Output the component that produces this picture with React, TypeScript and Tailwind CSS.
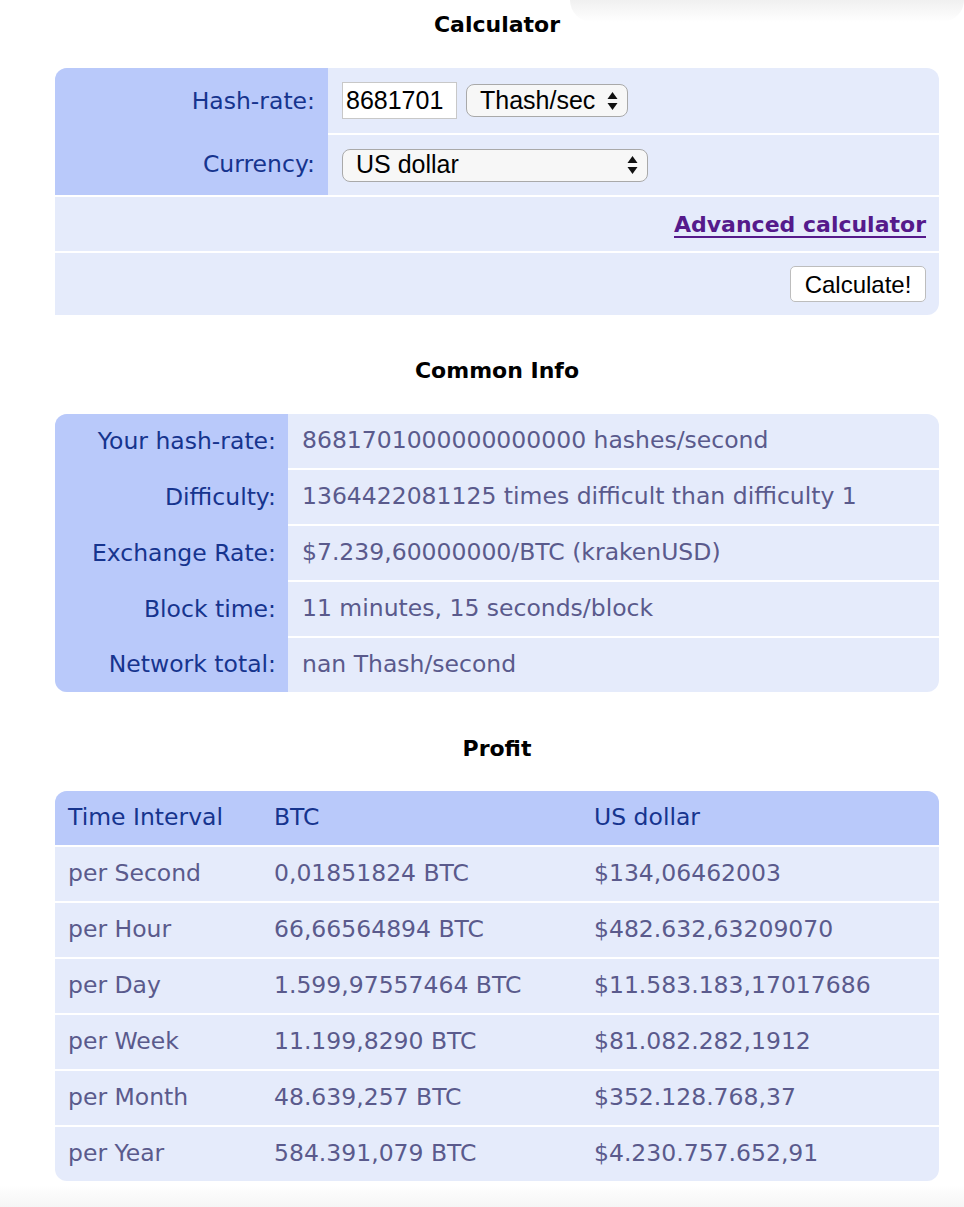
import React from "react";

const labelFont = "font-['DejaVu_Sans',Verdana,sans-serif]";
const ctrlFont = "font-['Liberation_Sans',Arial,sans-serif]";

const Arrows: React.FC = () => (
  <svg width="11" height="20" viewBox="0 0 11 20" className="shrink-0">
    <path d="M5.5 1 L10.5 8 L0.5 8 Z" fill="#111" />
    <path d="M5.5 19 L10.5 12 L0.5 12 Z" fill="#111" />
  </svg>
);

const Heading: React.FC<{ children: React.ReactNode; className?: string }> = ({ children, className }) => (
  <div className={`h-[48px] flex items-center justify-center text-[22px] font-bold text-black ${labelFont} ${className ?? ""}`}>
    {children}
  </div>
);

const info = [
  ["Your hash-rate:", "8681701000000000000 hashes/second"],
  ["Difficulty:", "1364422081125 times difficult than difficulty 1"],
  ["Exchange Rate:", "$7.239,60000000/BTC (krakenUSD)"],
  ["Block time:", "11 minutes, 15 seconds/block"],
  ["Network total:", "nan Thash/second"],
];

const profit = [
  ["per Second", "0,01851824 BTC", "$134,06462003"],
  ["per Hour", "66,66564894 BTC", "$482.632,63209070"],
  ["per Day", "1.599,97557464 BTC", "$11.583.183,17017686"],
  ["per Week", "11.199,8290 BTC", "$81.082.282,1912"],
  ["per Month", "48.639,257 BTC", "$352.128.768,37"],
  ["per Year", "584.391,079 BTC", "$4.230.757.652,91"],
];

export default function App() {
  return (
    <div className={`relative w-[964px] h-[1207px] bg-white overflow-hidden ${labelFont}`}>
      {/* shadow of an overlay at the top right */}
      <div className="absolute top-0 left-[570px] right-0 h-[22px] bg-gradient-to-b from-[#f0f0f0] to-transparent rounded-b-[40px] pointer-events-none" />

      <div className="px-[55px] pr-[25px]">
        <Heading>Calculator</Heading>

        {/* Calculator */}
        <div className="mt-[20px] bg-[#e5ebfb] rounded-tl-[12px] rounded-tr-[12px] rounded-br-[12px] overflow-hidden">
          <div className="grid grid-cols-[273px_1fr] border-b-2 border-white">
            <div className="bg-[#b9c9fa] flex flex-col text-[23.5px] text-[#16348e]">
              <div className="h-[67px] flex items-center justify-end pr-[13px]">Hash-rate:</div>
              <div className="h-[60px] flex items-center justify-end pr-[13px]">Currency:</div>
            </div>
            <div className="flex flex-col">
              <div className="h-[67px] flex items-center pl-[14px] gap-[9px] border-b-2 border-white">
                <div className={`w-[115px] h-[37px] bg-white border border-[#c8c8c8] flex items-center pl-[3px] text-[25px] text-black ${ctrlFont}`}>
                  8681701
                </div>
                <div className={`w-[162px] h-[33px] bg-[#f7f7f7] border-[1.5px] border-[#a9a9a9] rounded-[8px] flex items-center justify-between pl-[13px] pr-[9px] text-[25px] text-black ${ctrlFont}`}>
                  <span>Thash/sec</span>
                  <Arrows />
                </div>
              </div>
              <div className="h-[60px] flex items-center pl-[14px]">
                <div className={`w-[306px] h-[33px] bg-[#f7f7f7] border-[1.5px] border-[#a9a9a9] rounded-[8px] flex items-center justify-between pl-[13px] pr-[9px] text-[25px] text-black ${ctrlFont}`}>
                  <span>US dollar</span>
                  <Arrows />
                </div>
              </div>
            </div>
          </div>
          <div className="h-[56px] flex items-center justify-end pr-[13px] border-b-2 border-white">
            <a href="#" className="text-[22px] font-bold text-[#551a8b] underline underline-offset-[4px] decoration-[2px]">
              Advanced calculator
            </a>
          </div>
          <div className="h-[62px] flex items-center justify-end pr-[13px]">
            <button className={`w-[136px] h-[36px] bg-white border-[1.5px] border-[#bdbdbd] rounded-[5px] text-[24px] text-black ${ctrlFont}`}>
              Calculate!
            </button>
          </div>
        </div>

        <Heading className="mt-[31px]">Common Info</Heading>

        {/* Common info */}
        <div className="mt-[20px] grid grid-cols-[233px_1fr] rounded-[12px] overflow-hidden bg-[#e5ebfb] text-[23.5px]">
          <div className="bg-[#b9c9fa] flex flex-col text-[#16348e]">
            {info.map(([label], i) => (
              <div key={i} className={`flex items-center justify-end pr-[12px] ${i < info.length - 1 ? "h-[56px]" : "h-[54px]"}`}>
                {label}
              </div>
            ))}
          </div>
          <div className="flex flex-col text-[#5a5a8c]">
            {info.map(([, value], i) => (
              <div
                key={i}
                className={`flex items-center pl-[14px] whitespace-nowrap ${i < info.length - 1 ? "h-[56px] border-b-2 border-white" : "h-[54px]"}`}
              >
                {value}
              </div>
            ))}
          </div>
        </div>

        <Heading className="mt-[32px]">Profit</Heading>

        {/* Profit */}
        <div className="mt-[19px] rounded-[12px] overflow-hidden bg-[#e5ebfb] text-[23.5px]">
          <div className="h-[56px] grid grid-cols-[206px_320px_1fr] items-center bg-[#b9c9fa] text-[#16348e] border-b-2 border-white">
            <div className="pl-[13px]">Time Interval</div>
            <div className="pl-[13px]">BTC</div>
            <div className="pl-[13px]">US dollar</div>
          </div>
          {profit.map(([a, b, c], i) => (
            <div
              key={i}
              className={`grid grid-cols-[206px_320px_1fr] items-center text-[#5a5a8c] whitespace-nowrap ${i < profit.length - 1 ? "h-[56px] border-b-2 border-white" : "h-[54px]"}`}
            >
              <div className="pl-[13px]">{a}</div>
              <div className="pl-[13px]">{b}</div>
              <div className="pl-[13px]">{c}</div>
            </div>
          ))}
        </div>
      </div>

      {/* faint shade at the bottom */}
      <div className="mt-[4px] h-[30px] bg-gradient-to-b from-white to-[#f2f2f2]" />
    </div>
  );
}
